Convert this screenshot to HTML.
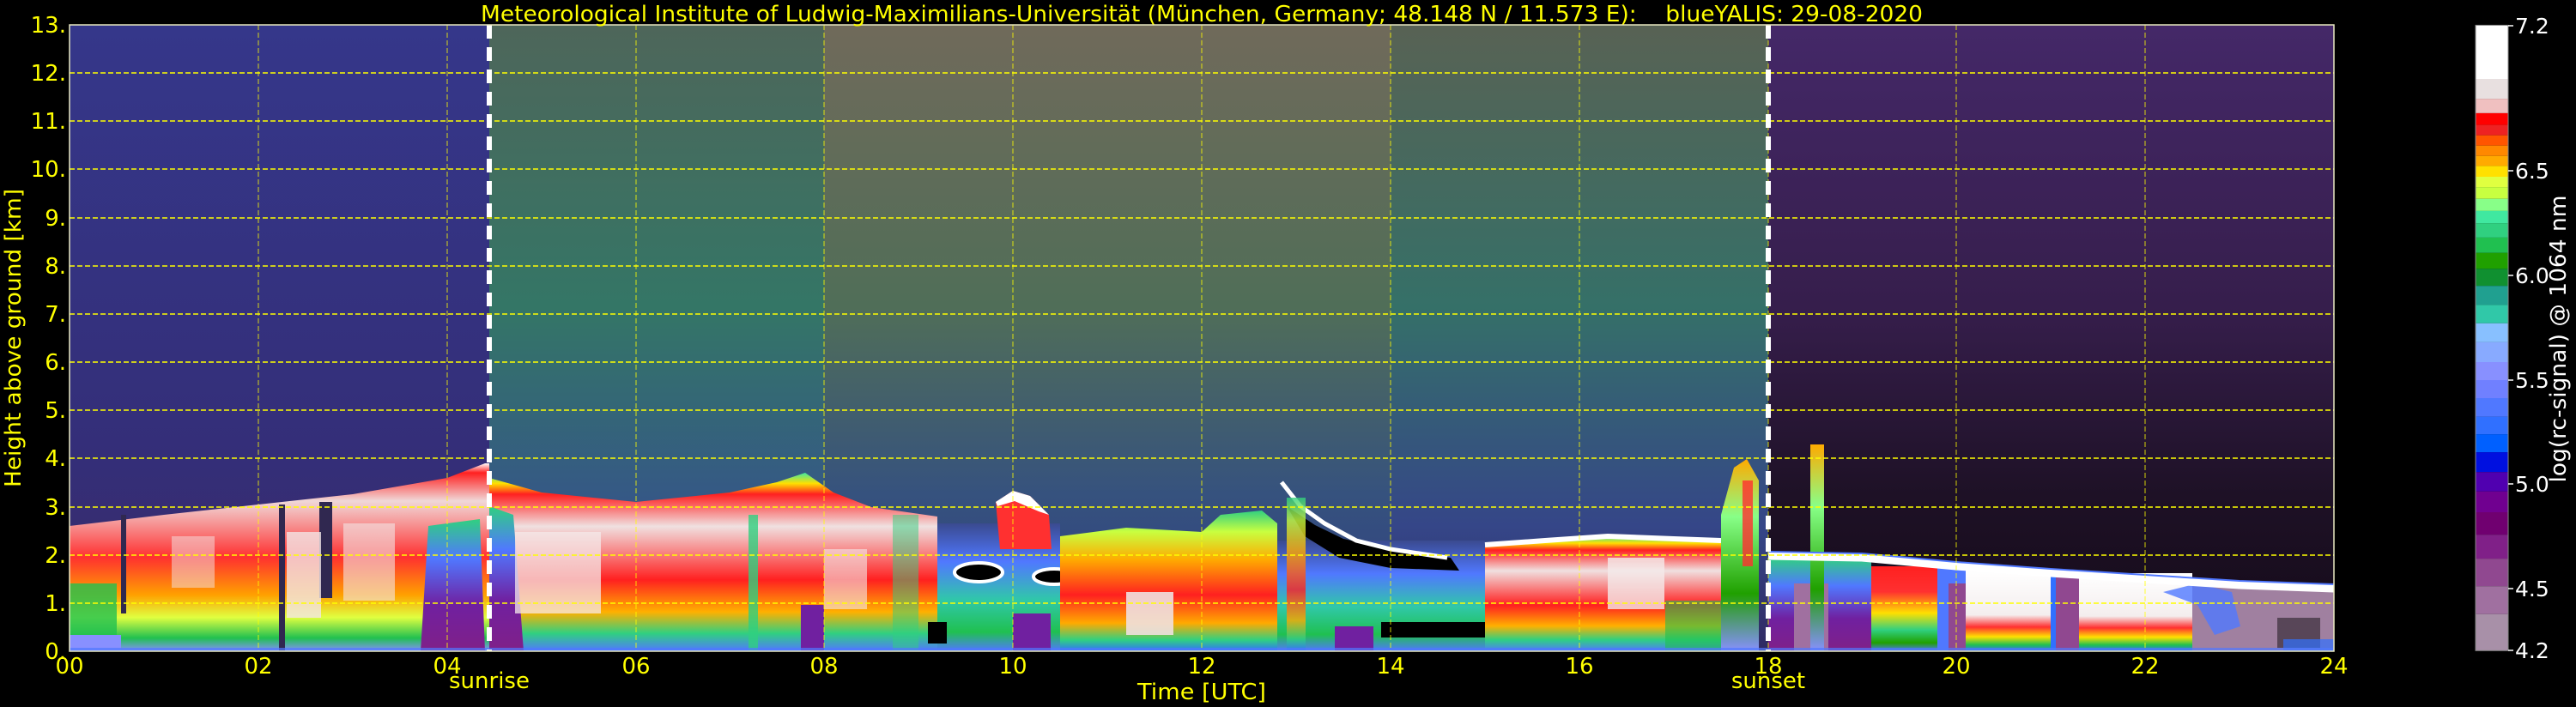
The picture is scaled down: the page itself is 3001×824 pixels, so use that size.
<!DOCTYPE html>
<html><head><meta charset="utf-8"><style>
html,body{margin:0;padding:0;background:#000;}
svg{display:block;}
text{font-family:"DejaVu Sans","Liberation Sans",sans-serif;}
</style></head><body>
<svg width="3001" height="824" viewBox="0 0 3001 824" xmlns="http://www.w3.org/2000/svg">
<defs>
<linearGradient id="upL" x1="0" y1="0" x2="0" y2="1"><stop offset="0" stop-color="#35378a"/><stop offset="0.7" stop-color="#342e78"/><stop offset="1" stop-color="#3c2a66"/></linearGradient>
<linearGradient id="upM1" x1="0" y1="0" x2="0" y2="1"><stop offset="0" stop-color="#4e665a"/><stop offset="0.45" stop-color="#347666"/><stop offset="0.8" stop-color="#35548a"/><stop offset="1" stop-color="#33428a"/></linearGradient>
<linearGradient id="upM2" x1="0" y1="0" x2="0" y2="1"><stop offset="0" stop-color="#706a5a"/><stop offset="0.45" stop-color="#506e58"/><stop offset="0.75" stop-color="#36527e"/><stop offset="1" stop-color="#2e3a82"/></linearGradient>
<linearGradient id="upM3" x1="0" y1="0" x2="0" y2="1"><stop offset="0" stop-color="#586254"/><stop offset="0.45" stop-color="#357068"/><stop offset="0.8" stop-color="#354688"/><stop offset="1" stop-color="#302a62"/></linearGradient>
<linearGradient id="upR" x1="0" y1="0" x2="0" y2="1"><stop offset="0" stop-color="#442868"/><stop offset="0.45" stop-color="#361e4c"/><stop offset="0.75" stop-color="#1e1126"/><stop offset="1" stop-color="#140a18"/></linearGradient>
<linearGradient id="gBL" x1="0" y1="0" x2="0" y2="1"><stop offset="0" stop-color="#ffffff"/><stop offset="0.05" stop-color="#ff2020"/><stop offset="0.2" stop-color="#f0d8d8"/><stop offset="0.5" stop-color="#ff3030"/><stop offset="0.7" stop-color="#ffa000"/><stop offset="0.82" stop-color="#e0ff40"/><stop offset="0.93" stop-color="#20c050"/><stop offset="1" stop-color="#8890ff"/></linearGradient>
<linearGradient id="gRed" x1="0" y1="0" x2="0" y2="1"><stop offset="0" stop-color="#40e8a0"/><stop offset="0.06" stop-color="#ffe000"/><stop offset="0.12" stop-color="#ff2020"/><stop offset="0.3" stop-color="#f0e0e0"/><stop offset="0.6" stop-color="#ff2020"/><stop offset="0.78" stop-color="#ffb000"/><stop offset="0.9" stop-color="#30d080"/><stop offset="1" stop-color="#5078ff"/></linearGradient>
<linearGradient id="gWarm" x1="0" y1="0" x2="0" y2="1"><stop offset="0" stop-color="#30d080"/><stop offset="0.15" stop-color="#c8ff40"/><stop offset="0.35" stop-color="#ffaa00"/><stop offset="0.6" stop-color="#ff2020"/><stop offset="0.8" stop-color="#ffaa00"/><stop offset="0.92" stop-color="#30d080"/><stop offset="1" stop-color="#3070ff"/></linearGradient>
<linearGradient id="gBlue" x1="0" y1="0" x2="0" y2="1"><stop offset="0" stop-color="#30d080"/><stop offset="0.3" stop-color="#5078ff"/><stop offset="0.65" stop-color="#7020a0"/><stop offset="1" stop-color="#802088"/></linearGradient>
<linearGradient id="gGB" x1="0" y1="0" x2="0" y2="1"><stop offset="0" stop-color="#3a4a90"/><stop offset="0.3" stop-color="#5078ff"/><stop offset="0.6" stop-color="#30c8a8"/><stop offset="0.85" stop-color="#20c050"/><stop offset="1" stop-color="#5078ff"/></linearGradient>
<linearGradient id="gGreen" x1="0" y1="0" x2="0" y2="1"><stop offset="0" stop-color="#ffaa00"/><stop offset="0.3" stop-color="#88ff88"/><stop offset="0.7" stop-color="#20a000"/><stop offset="1" stop-color="#8890ff"/></linearGradient>
<linearGradient id="gNight" x1="0" y1="0" x2="0" y2="1"><stop offset="0" stop-color="#ff2020"/><stop offset="0.3" stop-color="#ff3030"/><stop offset="0.55" stop-color="#ffe000"/><stop offset="0.75" stop-color="#30d080"/><stop offset="0.9" stop-color="#20a000"/><stop offset="1" stop-color="#5078ff"/></linearGradient>
<linearGradient id="gWhiteLow" x1="0" y1="0" x2="0" y2="1"><stop offset="0" stop-color="#ffffff"/><stop offset="0.55" stop-color="#f4eeee"/><stop offset="0.7" stop-color="#ff3030"/><stop offset="0.82" stop-color="#ffe000"/><stop offset="0.92" stop-color="#20c050"/><stop offset="1" stop-color="#3070ff"/></linearGradient>
</defs>

<rect x="81" y="29" width="489" height="730" fill="url(#upL)"/>
<rect x="570" y="29" width="390" height="730" fill="url(#upM1)"/>
<rect x="960" y="29" width="660" height="730" fill="url(#upM2)"/>
<rect x="1620" y="29" width="440" height="730" fill="url(#upM3)"/>
<rect x="2060" y="29" width="659" height="730" fill="url(#upR)"/>

<polygon points="81,613 191,600 301,588 411,576 521,557 565,540 570,540 570,759 81,759" fill="url(#gBL)"/>
<rect x="81" y="680" width="55" height="79" fill="#20c050" opacity="0.8"/>
<rect x="81" y="740" width="60" height="19" fill="#8890ff"/>
<rect x="141" y="600" width="6" height="115" fill="#302850"/>
<rect x="325" y="588" width="7" height="171" fill="#302850"/>
<rect x="372" y="585" width="15" height="112" fill="#302850"/>
<rect x="334" y="620" width="40" height="100" fill="#f2e6e6" opacity="0.8"/>
<rect x="400" y="610" width="60" height="90" fill="#f2e6e6" opacity="0.6"/>
<rect x="200" y="625" width="50" height="60" fill="#f2e6e6" opacity="0.5"/>
<polygon points="499,613 559,605 565,759 490,759" fill="url(#gBlue)"/>

<polygon points="570,557 631,574 741,585 850,574 905,562 938,551 971,574 1015,591 1092,602 1092,759 570,759" fill="url(#gRed)"/>
<polygon points="570,590 598,600 610,759 570,759" fill="url(#gBlue)"/>
<rect x="600" y="620" width="100" height="95" fill="#f4eaea" opacity="0.75"/>
<rect x="960" y="640" width="50" height="70" fill="#f4eaea" opacity="0.6"/>
<rect x="933" y="705" width="27" height="54" fill="#7020a0"/>
<rect x="872" y="600" width="11" height="159" fill="#30d080" opacity="0.8"/>
<rect x="1040" y="600" width="30" height="159" fill="#30d080" opacity="0.5"/>

<rect x="1092" y="610" width="143" height="149" fill="url(#gGB)"/>
<rect x="1081" y="725" width="22" height="25" fill="#000"/>
<ellipse cx="1140" cy="667" rx="28" ry="11" fill="#000" stroke="#fff" stroke-width="4"/>
<ellipse cx="1228" cy="672" rx="24" ry="9" fill="#000" stroke="#fff" stroke-width="4"/>
<polygon points="1160,585 1180,572 1200,578 1222,600 1225,640 1165,640" fill="#ff3030"/>
<polygon points="1160,585 1180,572 1200,578 1222,600 1210,596 1182,584 1162,590" fill="#fff"/>
<rect x="1180" y="715" width="44" height="44" fill="#7020a0"/>

<polygon points="1235,625 1312,615 1400,620 1422,600 1470,595 1488,610 1488,759 1235,759" fill="url(#gWarm)"/>
<rect x="1312" y="690" width="55" height="50" fill="#f0e0e0" opacity="0.9"/>

<rect x="1488" y="630" width="242" height="129" fill="url(#gGB)"/>
<polygon points="1499,590 1532,612 1565,628 1620,640 1690,650 1700,665 1620,662 1560,650 1520,625" fill="#000"/>
<polyline points="1493,562 1515,590 1543,610 1580,630 1620,640 1686,650" fill="none" stroke="#fff" stroke-width="5"/>
<rect x="1499" y="580" width="22" height="179" fill="url(#gWarm)" opacity="0.8"/>
<rect x="1609" y="725" width="121" height="18" fill="#000"/>
<rect x="1555" y="730" width="45" height="29" fill="#7020a0"/>

<polygon points="1730,635 1800,630 1873,625 1950,628 2005,630 2005,759 1730,759" fill="url(#gRed)"/>
<polyline points="1730,635 1800,630 1873,625 1950,628 2005,630" fill="none" stroke="#fff" stroke-width="6"/>
<rect x="1873" y="650" width="66" height="60" fill="#f4eaea" opacity="0.8"/>
<rect x="1940" y="700" width="65" height="59" fill="#20c050" opacity="0.6"/>
<polygon points="2005,600 2020,545 2035,535 2049,560 2049,759 2005,759" fill="url(#gGreen)"/>
<rect x="2030" y="560" width="12" height="100" fill="#ff3030" opacity="0.8"/>

<rect x="2060" y="650" width="120" height="109" fill="url(#gBlue)"/>
<rect x="2090" y="680" width="40" height="79" fill="#a070a0"/>
<rect x="2109" y="518" width="16" height="241" fill="url(#gGreen)"/>
<rect x="2180" y="660" width="77" height="99" fill="url(#gNight)"/>
<rect x="2257" y="660" width="33" height="99" fill="#5078ff"/>
<rect x="2270" y="680" width="20" height="79" fill="#904890"/>
<rect x="2290" y="665" width="99" height="94" fill="url(#gWhiteLow)"/>
<rect x="2389" y="670" width="33" height="89" fill="#904890"/>
<rect x="2389" y="670" width="6" height="89" fill="#3070ff"/>
<rect x="2422" y="668" width="132" height="91" fill="url(#gWhiteLow)"/>
<rect x="2554" y="680" width="165" height="79" fill="#a080a0"/>
<polygon points="2520,690 2560,680 2600,690 2610,730 2580,740 2560,705" fill="#5078ff" opacity="0.8"/>
<rect x="2653" y="720" width="50" height="35" fill="#282028" opacity="0.6"/>
<rect x="2660" y="745" width="59" height="14" fill="#3070ff" opacity="0.7"/>
<polyline points="2060,648 2169,650 2279,660 2389,668 2499,675 2609,682 2719,686" fill="none" stroke="#fff" stroke-width="9"/>
<polyline points="2060,643 2169,645 2279,655 2389,663 2499,670 2609,677 2719,681" fill="none" stroke="#5078ff" stroke-width="2"/>

<rect x="81" y="755" width="2638" height="4" fill="#5078ff" opacity="0.7"/>

<g stroke="#ffff00" stroke-width="1.5" stroke-dasharray="6,3" fill="none">
<line x1="81" y1="703" x2="2719" y2="703"/><line x1="81" y1="647" x2="2719" y2="647"/><line x1="81" y1="591" x2="2719" y2="591"/><line x1="81" y1="534" x2="2719" y2="534"/><line x1="81" y1="478" x2="2719" y2="478"/><line x1="81" y1="422" x2="2719" y2="422"/><line x1="81" y1="366" x2="2719" y2="366"/><line x1="81" y1="310" x2="2719" y2="310"/><line x1="81" y1="254" x2="2719" y2="254"/><line x1="81" y1="197" x2="2719" y2="197"/><line x1="81" y1="141" x2="2719" y2="141"/><line x1="81" y1="85" x2="2719" y2="85"/>
</g>
<g stroke="#ffff00" stroke-width="0.8" stroke-dasharray="6,3" fill="none">
<line x1="301" y1="29" x2="301" y2="759"/><line x1="521" y1="29" x2="521" y2="759"/><line x1="741" y1="29" x2="741" y2="759"/><line x1="960" y1="29" x2="960" y2="759"/><line x1="1180" y1="29" x2="1180" y2="759"/><line x1="1400" y1="29" x2="1400" y2="759"/><line x1="1620" y1="29" x2="1620" y2="759"/><line x1="1840" y1="29" x2="1840" y2="759"/><line x1="2060" y1="29" x2="2060" y2="759"/><line x1="2279" y1="29" x2="2279" y2="759"/><line x1="2499" y1="29" x2="2499" y2="759"/>
</g>
<line x1="570" y1="29" x2="570" y2="759" stroke="#fff" stroke-width="6" stroke-dasharray="16,10"/>
<line x1="2060" y1="29" x2="2060" y2="759" stroke="#fff" stroke-width="6" stroke-dasharray="16,10"/>
<rect x="81" y="29" width="2638" height="730" fill="none" stroke="#e8e8c0" stroke-width="1.5"/>

<text x="1400" y="25" fill="#ffff00" font-size="26" text-anchor="middle" textLength="1680" lengthAdjust="spacingAndGlyphs" xml:space="preserve">Meteorological Institute of Ludwig-Maximilians-Universität (München, Germany; 48.148 N / 11.573 E):    blueYALIS: 29-08-2020</text>

<g fill="#ffff00" font-size="26" text-anchor="end">
<text x="77" y="38">13.</text><text x="77" y="94">12.</text><text x="77" y="150">11.</text><text x="77" y="206">10.</text><text x="77" y="263">9.</text><text x="77" y="319">8.</text><text x="77" y="375">7.</text><text x="77" y="431">6.</text><text x="77" y="487">5.</text><text x="77" y="543">4.</text><text x="77" y="600">3.</text><text x="77" y="656">2.</text><text x="77" y="712">1.</text><text x="77" y="768">0.</text>
</g>
<text transform="translate(24,394) rotate(-90)" fill="#ffff00" font-size="26" text-anchor="middle" textLength="348" lengthAdjust="spacingAndGlyphs">Height above ground [km]</text>

<g fill="#ffff00" font-size="26" text-anchor="middle">
<text x="81" y="785">00</text><text x="301" y="785">02</text><text x="521" y="785">04</text><text x="741" y="785">06</text><text x="960" y="785">08</text><text x="1180" y="785">10</text><text x="1400" y="785">12</text><text x="1620" y="785">14</text><text x="1840" y="785">16</text><text x="2060" y="785">18</text><text x="2279" y="785">20</text><text x="2499" y="785">22</text><text x="2719" y="785">24</text>
<text x="570" y="802">sunrise</text><text x="2060" y="802">sunset</text>
<text x="1400" y="815" textLength="150" lengthAdjust="spacingAndGlyphs">Time [UTC]</text>
</g>

<g>
<rect x="2884" y="29.4" width="38" height="62.6" fill="#ffffff"/>
<rect x="2884" y="92" width="38" height="23.1" fill="#e8e0e0"/>
<rect x="2884" y="115.1" width="38" height="16.8" fill="#f0c0c0"/>
<rect x="2884" y="131.9" width="38" height="13.7" fill="#ff0000"/>
<rect x="2884" y="145.6" width="38" height="12.1" fill="#ee2222"/>
<rect x="2884" y="157.7" width="38" height="12" fill="#ff5500"/>
<rect x="2884" y="169.7" width="38" height="12.1" fill="#ff8800"/>
<rect x="2884" y="181.8" width="38" height="11.6" fill="#ffaa00"/>
<rect x="2884" y="193.4" width="38" height="12.6" fill="#ffe000"/>
<rect x="2884" y="206" width="38" height="12.1" fill="#e0ff40"/>
<rect x="2884" y="218.1" width="38" height="13.6" fill="#c8ff40"/>
<rect x="2884" y="231.7" width="38" height="14.2" fill="#88ff88"/>
<rect x="2884" y="245.9" width="38" height="14.2" fill="#40e8a0"/>
<rect x="2884" y="260.1" width="38" height="16.8" fill="#30d080"/>
<rect x="2884" y="276.9" width="38" height="17.9" fill="#20c050"/>
<rect x="2884" y="294.8" width="38" height="18.4" fill="#20a000"/>
<rect x="2884" y="313.2" width="38" height="20" fill="#109030"/>
<rect x="2884" y="333.2" width="38" height="22" fill="#20a090"/>
<rect x="2884" y="355.2" width="38" height="21.6" fill="#30c8a8"/>
<rect x="2884" y="376.8" width="38" height="22.1" fill="#88c0ff"/>
<rect x="2884" y="398.9" width="38" height="23.1" fill="#88aaff"/>
<rect x="2884" y="422" width="38" height="21" fill="#8890ff"/>
<rect x="2884" y="443" width="38" height="21" fill="#7080ff"/>
<rect x="2884" y="464" width="38" height="21.6" fill="#5078ff"/>
<rect x="2884" y="485.6" width="38" height="20.5" fill="#3070ff"/>
<rect x="2884" y="506.1" width="38" height="21" fill="#0060ff"/>
<rect x="2884" y="527.1" width="38" height="23.1" fill="#0010e0"/>
<rect x="2884" y="550.2" width="38" height="22.6" fill="#5000b0"/>
<rect x="2884" y="572.8" width="38" height="24.2" fill="#700090"/>
<rect x="2884" y="597" width="38" height="26.2" fill="#700070"/>
<rect x="2884" y="623.2" width="38" height="27.9" fill="#802088"/>
<rect x="2884" y="651.1" width="38" height="32.1" fill="#904890"/>
<rect x="2884" y="683.2" width="38" height="32.6" fill="#a070a0"/>
<rect x="2884" y="715.8" width="38" height="42.5" fill="#a890a8"/>
<rect x="2884" y="29.4" width="38" height="728.9" fill="none" stroke="#888" stroke-width="1"/>
</g>
<g stroke="#fff" stroke-width="1.5">
<line x1="2922" y1="30" x2="2928" y2="30"/><line x1="2922" y1="199" x2="2928" y2="199"/><line x1="2922" y1="321" x2="2928" y2="321"/><line x1="2922" y1="443" x2="2928" y2="443"/><line x1="2922" y1="564" x2="2928" y2="564"/><line x1="2922" y1="686" x2="2928" y2="686"/><line x1="2922" y1="758" x2="2928" y2="758"/>
</g>
<g fill="#fff" font-size="25">
<text x="2930" y="39">7.2</text><text x="2930" y="208">6.5</text><text x="2930" y="330">6.0</text><text x="2930" y="452">5.5</text><text x="2930" y="573">5.0</text><text x="2930" y="695">4.5</text><text x="2930" y="767">4.2</text>
</g>
<text transform="translate(2989,395) rotate(-90)" fill="#fff" font-size="26" text-anchor="middle" textLength="335" lengthAdjust="spacingAndGlyphs">log(rc-signal) @ 1064 nm</text>
</svg>
</body></html>
